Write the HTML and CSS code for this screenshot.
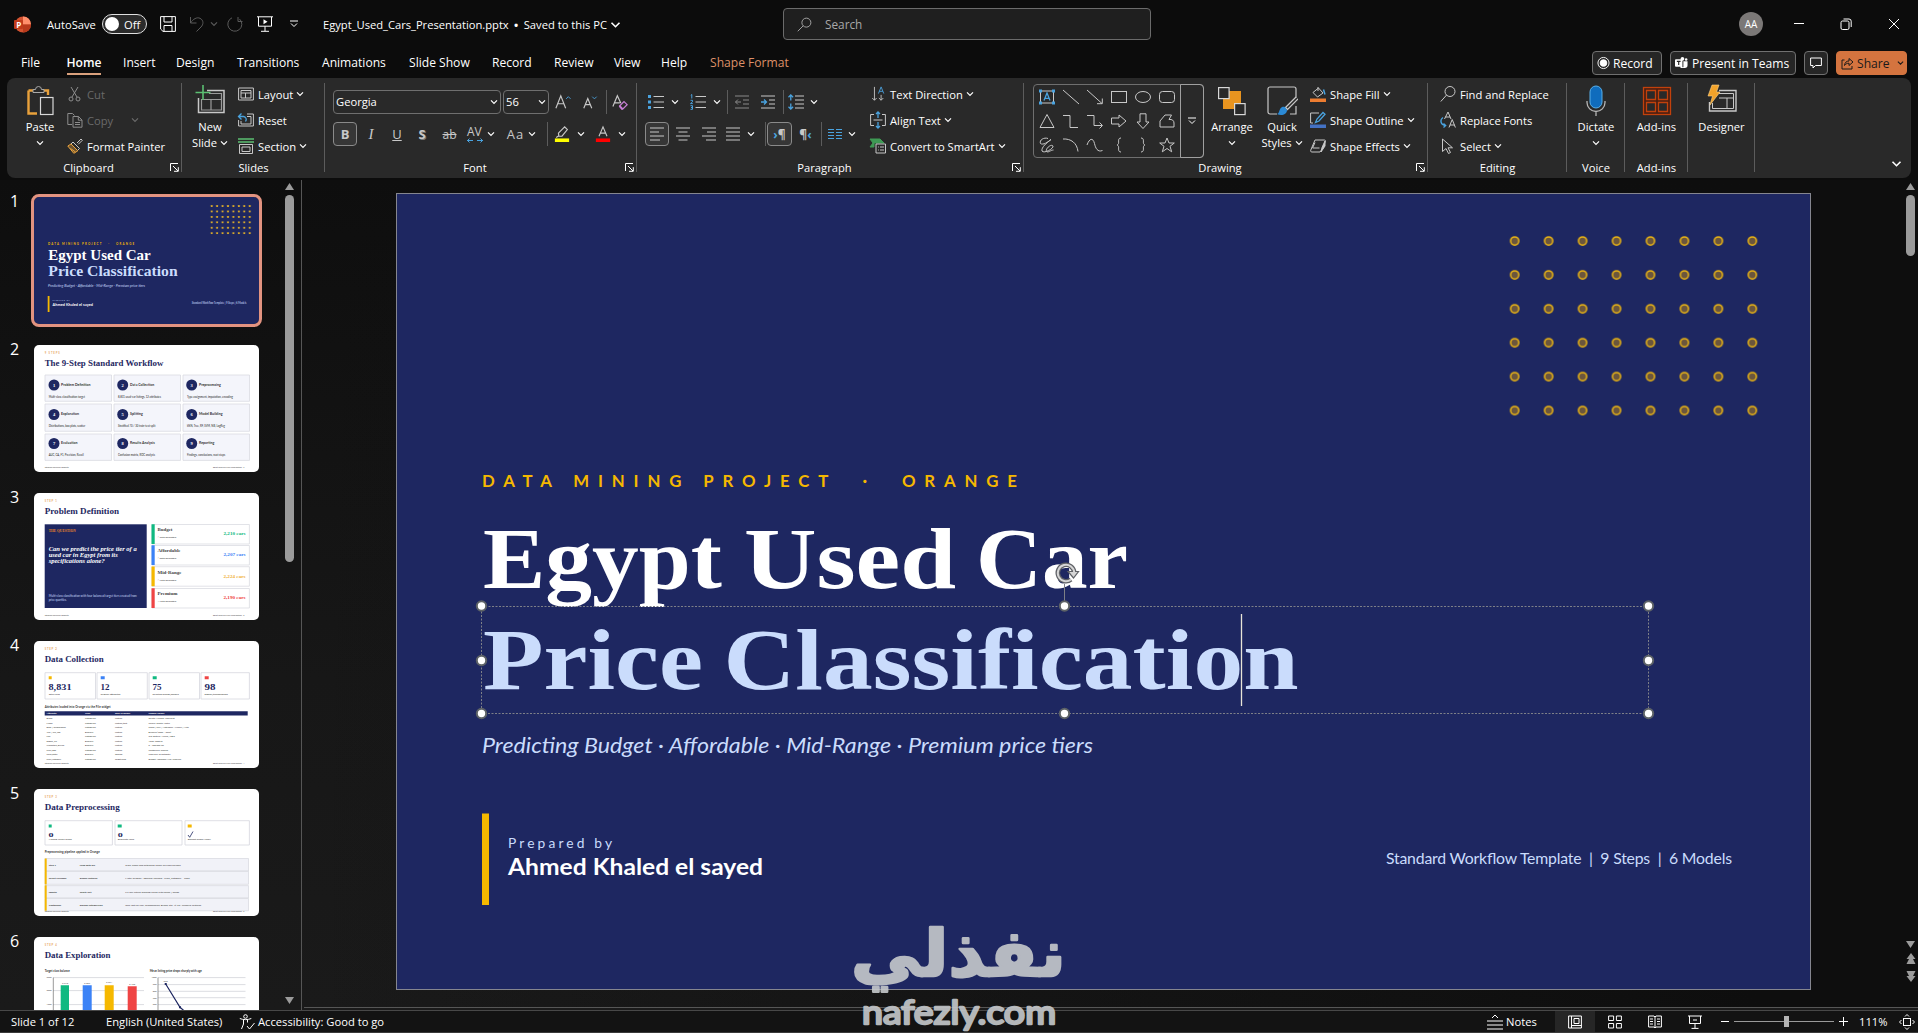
FILE: index.html
```html
<!DOCTYPE html>
<html lang="en">
<head>
  <meta charset="UTF-8">
  <meta name="viewport" content="width=device-width, initial-scale=1.0">
  <title>Egypt_Used_Cars_Presentation.pptx</title>
  <link rel="stylesheet" href="styles.css">
</head>
<body>
  <!-- Shared symbols -->
  <svg class="defs" width="0" height="0">
    <symbol id="chev" viewBox="0 0 8 6"><path d="M1 1.3l3 3 3-3" fill="none" stroke="currentColor" stroke-width="1.2"/></symbol>
    <symbol id="launch" viewBox="0 0 9 9"><path d="M.5 8V.5H8M3 3l5 5M8.3 4.2v4.1H4" fill="none" stroke="currentColor"/></symbol>
  </svg>

  <!-- Title bar -->
  <header class="titlebar">
    <div class="quick">
      <svg class="logo" viewBox="0 0 17 17"><circle cx="9" cy="8.500" r="8" fill="#d35230"/><path d="M9 .5a8 8 0 0 1 8 8H9z" fill="#ff8f6b"/><path d="M9 16.500a8 8 0 0 0 8-8H9z" fill="#b83a1c"/><rect x="0" y="4" width="9" height="9" rx="1" fill="#c13b1b"/><text x="2.200" y="11.500" font-size="8" font-weight="700" fill="#fff">P</text></svg>
      <span>AutoSave</span>
      <div class="toggle"><i></i>Off</div>
      <svg class="ico" viewBox="0 0 16 16"><path d="M.6.6h14.800v14.800H3L.6 13zM4 .6v5.400h8V.6M4 15.400V9.500h8v5.900"/></svg>
      <svg class="ico dim" viewBox="0 0 16 16"><path d="M1.500 1v6h6M1.500 7C4 3 8 .8 11 2.300c4 2 3.500 6.200 1 8.700L7.500 15.500"/></svg>
      <svg class="chev dim"><use href="#chev"/></svg>
      <svg class="ico dim" viewBox="0 0 16 16"><path d="M11 1v4.500h4.500M5 1.800a7 7 0 1 0 7.500 1.200"/></svg>
      <svg class="ico" viewBox="0 0 16 16"><path d="M0 .8h16M1.500 1v9.200h13V1M8 10.200v5M4 15.300h8"/><path d="M6.500 3.200v5l4-2.500z" fill="#fff" stroke="none"/></svg>
      <svg class="ico tiny" viewBox="0 0 8 8"><path d="M0 1h8M1 3.500l3 3 3-3"/></svg>
    </div>
    <div class="docname"><span class="fname">Egypt_Used_Cars_Presentation.pptx</span><b>•</b><span>Saved to this PC</span><svg class="chev big"><use href="#chev"/></svg></div>
    <div class="search"><svg class="ico" viewBox="0 0 16 16"><circle cx="10" cy="6" r="4.800"/><path d="M6.600 9.400L.8 15.200"/></svg>Search</div>
    <div class="winctl">
      <span class="avatar">AA</span>
      <svg class="ico" viewBox="0 0 12 12"><path d="M1 5.500h10"/></svg>
      <svg class="ico" viewBox="0 0 12 12"><rect x="1" y="3" width="8" height="8.500" rx="1.500"/><path d="M3.500 1h5.500a2.200 2.200 0 0 1 2.200 2.200V9"/></svg>
      <svg class="ico" viewBox="0 0 12 12"><path d="M1 1l10 10M11 1L1 11"/></svg>
    </div>
  </header>

  <!-- Tabs -->
  <nav class="tabs">
    <div class="tablist">
      <a>File</a><a class="active">Home</a><a>Insert</a><a>Design</a><a>Transitions</a><a>Animations</a><a>Slide Show</a><a>Record</a><a>Review</a><a>View</a><a>Help</a><a class="context">Shape Format</a>
    </div>
    <div class="actions">
      <button class="abtn rec"><svg class="ico" viewBox="0 0 14 14"><circle cx="7" cy="7" r="6"/><circle cx="7" cy="7" r="3.600" fill="#fff"/></svg>Record</button>
      <button class="abtn teams"><svg viewBox="0 0 14 14"><circle cx="8" cy="2.500" r="2" fill="#fff"/><circle cx="12" cy="3.300" r="1.400" fill="#fff"/><path d="M5 5h8.500v4.500a3 3 0 0 1-3 3H6z" fill="#fff"/><rect x="0" y="3" width="8" height="8" rx="1" fill="#fff"/><path d="M8.500 5v6.500" stroke="#222"/><path d="M2 5.200h4M4 5.200v4" stroke="#222" fill="none" stroke-width="1.200"/></svg>Present in Teams</button>
      <button class="abtn note"><svg class="ico" viewBox="0 0 12 12"><path d="M.6 1h10.800v7.500H5.500L3 11V8.500H.6z"/></svg></button>
      <button class="abtn share"><svg class="ico" viewBox="0 0 13 13"><path d="M3.500 3.500H1v9h10V9.500M3.500 9c.3-3 2-4.500 4.500-4.500V2l4 3.500-4 3.500V6.700C6 6.700 4.500 7.500 3.500 9z"/></svg>Share<svg class="chev"><use href="#chev"/></svg></button>
    </div>
  </nav>

  <!-- Ribbon -->
  <section class="ribbon">
    <div class="group clipboard">
      <div class="body">
        <div class="bigbtn">
          <svg viewBox="0 0 32 32"><path d="M4.500 6.500h5M19 6.500h5V11M13 29.500H4.500V6.500" fill="none" stroke="#e9a13b" stroke-width="2.400"/><path d="M9 8.500V5.500h2.500a3 3 0 0 1 6 0H20v3z" fill="#292929" stroke="#a9a9a9"/><rect x="16.500" y="13.500" width="12.500" height="17" fill="#292929" stroke="#d8d8d8" stroke-width="1.200"/></svg>
          Paste<svg class="chev"><use href="#chev"/></svg>
        </div>
        <div class="stack">
          <div class="sbtn dis"><svg class="ico" viewBox="0 0 16 16"><path d="M4 1l6 10M11 1L5 11"/><circle cx="4" cy="13" r="2"/><circle cx="11" cy="13" r="2"/></svg>Cut</div>
          <div class="sbtn dis"><svg class="ico" viewBox="0 0 16 16"><path d="M5 12.500H.8V1.500h4.700l2 2M6 4.500h5.500l3.500 3.500v7.200H6zM11.300 4.500v3.700H15M8 10.500h5M8 12.500h5"/></svg>Copy<svg class="chev far"><use href="#chev"/></svg></div>
          <div class="sbtn"><svg class="ico" viewBox="0 0 16 16"><path d="M10 5l4-4 1.300 1.300-4 4M6 4l6.500 6.500-2 2L4 6z"/><path d="M4 6L.8 8l6 7.300 4-2.500z" fill="#e9a13b" fill-opacity=".35" stroke="#e9a13b"/><path d="M3.500 10.500l5 3.500" stroke="#e9a13b"/></svg>Format Painter</div>
        </div>
      </div>
      <div class="label"><span>Clipboard</span><svg><use href="#launch"/></svg></div>
    </div>

    <div class="group slides">
      <div class="body">
        <div class="bigbtn">
          <svg viewBox="0 0 32 32"><path d="M13 6.500h17v22H4.500V14" fill="none" stroke="#c8c8c8" stroke-width="1.500"/><path d="M15 9.500h12.500v16.500H7.500V15M7.500 15.500h20M17 15.500V26" fill="none" stroke="#9a9a9a" stroke-width="1.200"/><path d="M9 1v15M1.500 8.500h15" stroke="#5bbf72" stroke-width="1.600"/></svg>
          New<span>Slide <svg class="chev"><use href="#chev"/></svg></span>
        </div>
        <div class="stack">
          <div class="sbtn"><svg class="ico" viewBox="0 0 16 16"><path d="M.6 2h14.800v12H.6zM3 4.500h10M3 7h10M3 4.500V12h10V4.500M7.500 7v5"/></svg>Layout<svg class="chev"><use href="#chev"/></svg></div>
          <div class="sbtn"><svg class="ico" viewBox="0 0 16 16"><path d="M9 2h6.400v12H.6V8M9 4.500h4V12H3V9"/><path d="M1 4.500h4.500a3 3 0 0 1 2 5M3.500 1.500l-3 3 3 3" stroke="#4aa3df" stroke-width="1.300"/></svg>Reset</div>
          <div class="sbtn"><svg class="ico" viewBox="0 0 16 16"><path d="M0 1h16M0 4h16" stroke="#5bbf72" stroke-width="1.400"/><path d="M1.500 6.500h13v9h-13zM4 9h8v4.500H4z"/></svg>Section<svg class="chev"><use href="#chev"/></svg></div>
        </div>
      </div>
      <div class="label"><span>Slides</span></div>
    </div>

    <div class="group font">
      <div class="rows">
        <div class="row fr1">
          <div class="combo face">Georgia<svg class="chev"><use href="#chev"/></svg></div>
          <div class="combo size">56<svg class="chev"><use href="#chev"/></svg></div>
          <div class="cell left0"><svg class="ico" viewBox="0 0 18 18"><path d="M1 16L6.500 2 12 16M3 11h7" stroke-width="1.300"/><path d="M12.500 5.500L15 3l2.500 2.500" stroke="#4aa3df"/></svg></div>
          <div class="cell left0"><svg class="ico" viewBox="0 0 18 18"><path d="M2 16L6.500 5 11 16M3.500 12h6" stroke-width="1.300"/><path d="M11.500 3L14 5.500 16.500 3" stroke="#4aa3df"/></svg></div>
          <i class="sep"></i>
          <div class="cell left0"><svg class="ico" viewBox="0 0 18 18"><path d="M1 14L6 2l4 8.500M2.800 10h6" stroke-width="1.300"/><path d="M8.500 13.500l5-5 3.500 3.500-5 5H11z" stroke="#c77fd6" stroke-width="1.400"/><path d="M8.500 13.500l3.500 3.500" stroke="#c77fd6" stroke-width="2"/></svg></div>
        </div>
        <div class="row fr2">
          <div class="cell on"><b>B</b></div>
          <div class="cell"><em>I</em></div>
          <div class="cell"><u>U</u></div>
          <div class="cell"><b class="shadow">S</b></div>
          <div class="cell"><s>ab</s></div>
          <div class="cell"><span class="av">AV<svg viewBox="0 0 16 5"><path d="M0 2.500h6M10 2.500h6M2.500.5l-2 2 2 2M13.500.5l2 2-2 2" fill="none" stroke="#4aa3df"/></svg></span><svg class="chev"><use href="#chev"/></svg></div>
          <div class="cell"><span class="aa">Aa</span><svg class="chev"><use href="#chev"/></svg></div>
          <i class="sep"></i>
          <div class="cell"><svg class="ico" viewBox="0 0 16 18"><path d="M4 8l7-7 3 3-6 7.500H4.500zM4.500 11l-3 2" stroke-width="1.300"/><rect y="14" width="16" height="4" fill="#ffff00" stroke="none"/></svg><svg class="chev gap"><use href="#chev"/></svg></div>
          <div class="cell"><svg class="ico" viewBox="0 0 16 18"><path d="M3.500 11.500L8 1l4.500 10.500M5 8h6" stroke-width="1.300"/><rect y="14" width="16" height="4" fill="#ff0000" stroke="none"/></svg><svg class="chev gap"><use href="#chev"/></svg></div>
        </div>
      </div>
      <div class="label"><span>Font</span><svg><use href="#launch"/></svg></div>
    </div>

    <div class="group para">
      <div class="body">
        <div class="rows">
          <div class="row pr1">
            <div class="cell left"><svg class="ico" viewBox="0 0 16 16"><path d="M5.500 2.500H16M5.500 8H16M5.500 13.500H16"/><path d="M0 1h3v3H0zM0 6.500h3v3H0zM0 12h3v3H0z" fill="#4aa3df" stroke="none"/></svg><svg class="chev gap"><use href="#chev"/></svg></div>
            <div class="cell left"><svg class="ico" viewBox="0 0 16 16"><path d="M5.500 2.500H16M5.500 8H16M5.500 13.500H16"/><path d="M.8 1.300l1-.8V4.500M.5 6.300h2v1.500l-2 1.800h2.300M.5 11.700h2v3.600h-2M1 13.500h1.500" stroke="#4aa3df"/></svg><svg class="chev gap"><use href="#chev"/></svg></div>
            <i class="sep"></i>
            <div class="cell dis2"><svg class="ico" viewBox="0 0 16 16"><path d="M1 2h14M9 6h6M9 10h6M1 14h14M7 8H1.500M4 5.500L1.500 8 4 10.500"/></svg></div>
            <div class="cell"><svg class="ico" viewBox="0 0 16 16"><path d="M1 2h14M9 6h6M9 10h6M1 14h14"/><path d="M1 8h5.500M4 5.500L6.500 8 4 10.500" stroke="#4aa3df" stroke-width="1.300"/></svg></div>
            <i class="sep"></i>
            <div class="cell left"><svg class="ico ml" viewBox="0 0 16 16"><path d="M7 2h9M7 6h9M7 10h9M7 14h9"/><path d="M2.800 1v5.500M.5 3.200l2.300-2.300 2.300 2.300M2.800 9.500V15M.5 12.800l2.300 2.300 2.300-2.300" stroke="#4aa3df" stroke-width="1.300"/></svg><svg class="chev"><use href="#chev"/></svg></div>
          </div>
          <div class="row pr2">
            <div class="cell on"><svg class="ico" viewBox="0 0 16 16"><path d="M1 2h14M1 6h9M1 10h14M1 14h10"/></svg></div>
            <div class="cell"><svg class="ico" viewBox="0 0 16 16"><path d="M1 2h14M3.500 6h9M1 10h14M3.500 14h9"/></svg></div>
            <div class="cell"><svg class="ico" viewBox="0 0 16 16"><path d="M1 2h14M6 6h9M1 10h14M5 14h10"/></svg></div>
            <div class="cell left"><svg class="ico just" viewBox="0 0 16 16"><path d="M1 2h14M1 6h14M1 10h14M1 14h14"/></svg><svg class="chev"><use href="#chev"/></svg></div>
            <i class="sep"></i>
            <div class="cell on"><span class="pil"><i>›</i>¶</span></div>
            <div class="cell"><span class="pil">¶<i>‹</i></span></div>
            <i class="sep"></i>
            <div class="cell left"><svg class="ico cols" viewBox="0 0 14 12"><path d="M0 1.500h6M0 4.500h6M0 7.500h6M0 10.500h6M8 1.500h6M8 4.500h6M8 7.500h6M8 10.500h6" stroke="#4aa3df"/></svg><svg class="chev"><use href="#chev"/></svg></div>
          </div>
        </div>
        <div class="stack">
          <div class="sbtn"><svg class="ico" viewBox="0 0 16 18"><path d="M4 1v15M1.500 13.500L4 16l2.500-2.500M11.500 10v6M9 13.500l2.500 2.500 2.500-2.500"/><path d="M8.500 8.500l3-7.500 3 7.500M9.500 6h4" stroke="#4aa3df"/></svg>Text Direction<svg class="chev"><use href="#chev"/></svg></div>
          <div class="sbtn"><svg class="ico" viewBox="0 0 16 16"><path d="M4 2.500H.6v11H4M12 2.500h3.400v11H12M3.500 8h9"/><path d="M8 0v6M8 10v6M6 2l2-2 2 2M6 14l2 2 2-2" stroke="#4aa3df" stroke-width="1.300"/></svg>Align Text<svg class="chev"><use href="#chev"/></svg></div>
          <div class="sbtn"><svg class="ico" viewBox="0 0 16 16"><path d="M0 1h10l4 4H4v4H0l3-4z" fill="#3f9a55" stroke="#3f9a55"/><path d="M6 6h9.500v9H6z" fill="#292929"/><path d="M8 9h.8M10 9h4M8 12h.8M10 12h4"/></svg>Convert to SmartArt<svg class="chev"><use href="#chev"/></svg></div>
        </div>
      </div>
      <div class="label"><span>Paragraph</span><svg><use href="#launch"/></svg></div>
    </div>

    <div class="group drawing">
      <div class="body">
        <div class="gallery">
          <div class="shapes">
            <svg class="ico" viewBox="0 0 16 16"><rect x="1.500" y="2" width="13" height="12"/><path d="M5 11.500L8 4l3 7.500M6 9.300h4" stroke="#4aa3df" stroke-width="1.300"/><path d="M0 .5h3v3H0zM13 .5h3v3h-3zM0 12.500h3v3H0zM13 12.500h3v3h-3z" fill="#4aa3df" stroke="none"/></svg>
            <svg class="ico" viewBox="0 0 16 16"><path d="M0 1l16 14"/></svg>
            <svg class="ico" viewBox="0 0 16 16"><path d="M0 1l15 13.500M15.300 9.500v5.200H10"/></svg>
            <svg class="ico" viewBox="0 0 16 16"><rect x=".5" y="2.500" width="15" height="11"/></svg>
            <svg class="ico" viewBox="0 0 16 16"><ellipse cx="8" cy="8" rx="7.500" ry="5.500"/></svg>
            <svg class="ico" viewBox="0 0 16 16"><rect x=".5" y="2.500" width="15" height="11" rx="3"/></svg>
            <svg class="ico" viewBox="0 0 16 16"><path d="M8 1.500l7 13H1z"/></svg>
            <svg class="ico" viewBox="0 0 16 16"><path d="M0 2.500h7v12h8"/></svg>
            <svg class="ico" viewBox="0 0 16 16"><path d="M0 2.500h7v10h8M12.500 9.500l3 3-3 3"/></svg>
            <svg class="ico" viewBox="0 0 16 16"><path d="M.5 5h7.500V2l7 6-7 6v-3H.5z"/></svg>
            <svg class="ico" viewBox="0 0 16 16"><path d="M5 .8h6V9h3l-6 6.500L2 9h3z"/></svg>
            <svg class="ico" viewBox="0 0 16 16"><path d="M1 14V8l5-6h6.500L10 6.500c3-.5 5 1 5 3.500v4z"/></svg>
            <svg class="ico" viewBox="0 0 16 16"><path d="M9 1.500C5 0 0 3 1.500 6.500 4 8.500 9 5 12 2.500c-4 3-10 8-9 11.500 2 3 12-2.500 11-5C12 6.500 6 12 7.500 14.500c2 1.500 4-1.500 7-1.500"/></svg>
            <svg class="ico" viewBox="0 0 16 16"><path d="M0 2c8-.5 14 4 15 12.500"/></svg>
            <svg class="ico" viewBox="0 0 16 16"><path d="M0 8c2.500-7 6-7.500 7.500-1.500 1 4.500 3 9 8 7"/></svg>
            <svg class="ico" viewBox="0 0 16 16"><path d="M10 1C6.500 1 8 5 7.500 6.500 7 8 6 8 6 8s1 0 1.500 1.500C8 11 6.500 15 10 15"/></svg>
            <svg class="ico" viewBox="0 0 16 16"><path d="M6 1c3.500 0 2 4 2.500 5.500C9 8 10 8 10 8s-1 0-1.500 1.500C8 11 9.500 15 6 15"/></svg>
            <svg class="ico" viewBox="0 0 16 16"><path d="M8 1l2 5h5.300l-4.300 3.300 1.700 5.500L8 11.500l-4.700 3.300L5 9.300.7 6H6z"/></svg>
          </div>
          <div class="more"><svg class="ico" viewBox="0 0 8 8"><path d="M0 1h8M1 3.500l3 3 3-3"/></svg></div>
        </div>
        <div class="bigbtn">
          <svg viewBox="0 0 32 32"><rect x="7" y="7" width="18" height="18" fill="#e8941f"/><rect x="2.600" y="3.600" width="10.500" height="11" fill="#292929" stroke="#d8d8d8" stroke-width="1.200"/><rect x="18.600" y="19.600" width="10.500" height="11" fill="#292929" stroke="#d8d8d8" stroke-width="1.200"/></svg>
          Arrange<svg class="chev"><use href="#chev"/></svg>
        </div>
        <div class="bigbtn">
          <svg viewBox="0 0 32 32"><path d="M11 30H4a2 2 0 0 1-2-2V5a2 2 0 0 1 2-2h24a2 2 0 0 1 2 2v10M24 30h6v-8" fill="none" stroke="#c8c8c8" stroke-width="1.200"/><path d="M31 14L20 25" stroke="#c8c8c8" stroke-width="4"/><path d="M31 14L21 24" stroke="#292929" stroke-width="1.600"/><path d="M19 23c-4-1-5 2-6 5-1 2-2 2-2 2 4 2 10 1 10-4z" fill="#2b8ad6"/></svg>
          Quick<span>Styles <svg class="chev"><use href="#chev"/></svg></span>
        </div>
        <div class="stack">
          <div class="sbtn"><svg class="ico" viewBox="0 0 16 16"><path d="M8 1v4M3 6.500L8.500 2 13 7l-5.500 4z"/><path d="M13.500 3.500l1.500 5" stroke="#4aa3df" stroke-width="1.500"/><path d="M0 12.500h16v3.500H0z" fill="#ed7d31" stroke="none"/></svg>Shape Fill<svg class="chev"><use href="#chev"/></svg></div>
          <div class="sbtn"><svg class="ico" viewBox="0 0 16 16"><path d="M9 1H.6v10H3"/><path d="M5.500 10.500L7 7l6-6.500 2 1.800L9 9z" stroke="#4aa3df" stroke-width="1.300"/><path d="M0 12.500h16v3.500H0z" fill="#4472c4" stroke="none"/></svg>Shape Outline<svg class="chev"><use href="#chev"/></svg></div>
          <div class="sbtn"><svg class="ico" viewBox="0 0 16 16"><path d="M5 2h9.500c1 0 1 .5.800 1.500L13 10l-3 4H2c-1.500 0-1.500-1-1.200-2z"/><path d="M12 9.500L15 3v5l-4 6z" fill="#c8c8c8"/><path d="M5 4.500L2.500 10h7"/></svg>Shape Effects<svg class="chev"><use href="#chev"/></svg></div>
        </div>
      </div>
      <div class="label"><span>Drawing</span><svg><use href="#launch"/></svg></div>
    </div>

    <div class="group editing">
      <div class="body">
        <div class="stack">
          <div class="sbtn"><svg class="ico" viewBox="0 0 16 16"><circle cx="10" cy="5.500" r="5"/><path d="M6.600 9L.8 15.500"/></svg>Find and Replace</div>
          <div class="sbtn"><svg class="ico" viewBox="0 0 16 16"><path d="M4.500 7L8 0l3 7M5.500 5h4.500M9 15.500l3.200-8 3.200 8M10 13h4.500"/><path d="M3 5.500C-.5 8 .5 13 5.500 13.500M3.500 11.500l2.200 2-2.200 2" stroke="#4aa3df" stroke-width="1.300"/></svg>Replace Fonts</div>
          <div class="sbtn"><svg class="ico" viewBox="0 0 16 16"><path d="M2.500 1v12.500l3.500-3 2.500 5 2-1-2.500-4.700h4.500z"/></svg>Select<svg class="chev"><use href="#chev"/></svg></div>
        </div>
      </div>
      <div class="label"><span>Editing</span></div>
    </div>

    <div class="group voice">
      <div class="bigbtn">
        <svg viewBox="0 0 32 32"><rect x="10" y="2" width="12" height="22" rx="6" fill="#0f6cbd" stroke="#58aee8"/><path d="M7 17v1.500a9 9 0 0 0 18 0V17M16 27.500V32" fill="none" stroke="#b5b5b5" stroke-width="1.300"/></svg>
        Dictate<svg class="chev"><use href="#chev"/></svg>
      </div>
      <div class="label"><span>Voice</span></div>
    </div>

    <div class="group addins">
      <div class="bigbtn">
        <svg viewBox="0 0 32 32"><rect x="2.500" y="3.500" width="27" height="27" fill="#4a1f12" stroke="#c2410c" stroke-width="1.300"/><path d="M5.500 6.500h9v9h-9zM17.500 6.500h9v9h-9zM5.500 18.500h9v9h-9zM17.500 18.500h9v9h-9z" fill="#292929" stroke="#c2410c" stroke-width="1.300"/></svg>
        Add-ins
      </div>
      <div class="label"><span>Add-ins</span></div>
    </div>

    <div class="group designer">
      <div class="bigbtn">
        <svg viewBox="0 0 32 32"><path d="M13 6.500h17v20.500H3.500V18" fill="none" stroke="#c8c8c8" stroke-width="1.400"/><path d="M13 9.500h14.500v15H6.500V19M13 14h14.500M21 14v10.500" fill="none" stroke="#c8c8c8"/><path d="M6 1h7l-2.500 7H14L4 21l2.500-9H2z" fill="#f3a32a" stroke="#ffd58a" stroke-width=".6"/></svg>
        Designer
      </div>
      <div class="label"></div>
    </div>
    <svg class="chev collapse"><use href="#chev"/></svg>
  </section>

  <!-- Workspace -->
  <main class="work">
    <aside class="pane">
      <div class="list">
        <div class="item sel"><span>1</span>
          <svg class="thumb" viewBox="0 0 225 127">
            <defs><pattern id="d" x="175" y="6.300" width="5.430" height="5.430" patternUnits="userSpaceOnUse"><rect x="1.700" y="1.700" width="2" height="2" rx=".6" fill="#d9a92a"/></pattern></defs>
            <rect width="225" height="127" fill="#1e2761"/>
            <rect x="175" y="6.300" width="43.400" height="32.500" fill="url(#d)"/>
            <text class="la b" x="14" y="48" font-size="2.800" fill="#f5b800" textLength="86" xml:space="preserve">DATA MINING PROJECT   ·   ORANGE</text>
            <g class="se" font-size="14"><text x="14.300" y="63.300" fill="#fff" textLength="102.400" lengthAdjust="spacingAndGlyphs">Egypt Used Car</text>
            <text x="14.300" y="79" fill="#cadcfc" textLength="129.400" lengthAdjust="spacingAndGlyphs">Price Classification</text></g>
            <text class="la it" x="14" y="90" font-size="3.700" fill="#cadcfc" textLength="97">Predicting Budget · Affordable · Mid-Range · Premium price tiers</text>
            <rect x="13.700" y="99" width="1.800" height="16" fill="#f5b800"/>
            <text class="la" x="18.500" y="103.800" font-size="2" fill="#cadcfc" textLength="17">Prepared by</text>
            <text class="la b" x="18.500" y="109.400" font-size="3.800" fill="#fff" textLength="40.500">Ahmed Khaled el sayed</text>
            <text class="la" x="157.700" y="107" font-size="2.700" fill="#cadcfc" textLength="54.700">Standard Workflow Template | 9 Steps | 6 Models</text>
          </svg>
        </div>
        <div class="item"><span>2</span>
          <svg class="thumb" viewBox="0 0 225 127">
            <rect width="225" height="127" fill="#fff"/>
            <text class="la b" x="10.700" y="9.400" font-size="2.700" fill="#e8a96a" textLength="15">9 STEPS</text>
            <text class="se" x="10.700" y="20.700" font-size="7.800" fill="#1e2761" textLength="118.700" lengthAdjust="spacingAndGlyphs">The 9-Step Standard Workflow</text>
            <g fill="#f4f5fb" stroke="#d5d7de" stroke-width=".7"><path d="M11 30h66.500v26.300H11zM80 30h66.500v26.300H80zM149 30h66.500v26.300H149zM11 59h66.500v27.300H11zM80 59h66.500v27.300H80zM149 59h66.500v27.300H149zM11 89h66.500v26.400H11zM80 89h66.500v26.400H80zM149 89h66.500v26.400H149z"/></g>
            <g fill="#1e2761"><circle cx="20" cy="40" r="5.500"/><circle cx="88.700" cy="40" r="5.500"/><circle cx="157.700" cy="40" r="5.500"/><circle cx="20" cy="69.500" r="5.500"/><circle cx="88.700" cy="69.500" r="5.500"/><circle cx="157.700" cy="69.500" r="5.500"/><circle cx="20" cy="98.500" r="5.500"/><circle cx="88.700" cy="98.500" r="5.500"/><circle cx="157.700" cy="98.500" r="5.500"/></g>
            <g class="se mid" font-size="4.500" fill="#fff"><text x="20" y="41.600">1</text><text x="88.700" y="41.600">2</text><text x="157.700" y="41.600">3</text><text x="20" y="71">4</text><text x="88.700" y="71">5</text><text x="157.700" y="71">6</text><text x="20" y="100">7</text><text x="88.700" y="100">8</text><text x="157.700" y="100">9</text></g>
            <g class="la b" font-size="3.500" fill="#333"><text x="27" y="41">Problem Definition</text><text x="96" y="41">Data Collection</text><text x="165" y="41">Preprocessing</text><text x="27" y="70">Exploration</text><text x="96" y="70">Splitting</text><text x="165" y="70">Model Building</text><text x="27" y="99">Evaluation</text><text x="96" y="99">Results Analysis</text><text x="165" y="99">Reporting</text></g>
            <g class="la" font-size="2.700" fill="#222"><text x="14.700" y="52.500">Multi-class classification target</text><text x="84" y="52.500">8,831 used-car listings, 12 attributes</text><text x="153" y="52.500">Type assignment, imputation, encoding</text><text x="14.700" y="81.500">Distributions, box plots, scatter</text><text x="84" y="81.500">Stratified 70 / 30 train-test split</text><text x="153" y="81.500">kNN, Tree, RF, SVM, NB, LogReg</text><text x="14.700" y="110.700">AUC, CA, F1, Precision, Recall</text><text x="84" y="110.700">Confusion matrix, ROC analysis</text><text x="153" y="110.700">Findings, conclusions, next steps</text></g>
            <g class="la" font-size="1.900" fill="#444"><text x="10.700" y="122.500">Standard Workflow Template</text><text x="179" y="122.500">Egypt Used Car Price Classification · 2</text></g>
          </svg>
        </div>
        <div class="item"><span>3</span>
          <svg class="thumb" viewBox="0 0 225 127">
            <rect width="225" height="127" fill="#fff"/>
            <text class="la b" x="10.700" y="9" font-size="2.700" fill="#e8a96a" textLength="12">STEP 1</text>
            <text class="se" x="10.700" y="20.600" font-size="7.800" fill="#1e2761" textLength="74.300" lengthAdjust="spacingAndGlyphs">Problem Definition</text>
            <rect x="10.700" y="31.300" width="102" height="83.700" fill="#1e2761"/>
            <text class="se" x="14.700" y="38.500" font-size="3.400" fill="#f08a24" textLength="27">THE QUESTION</text>
            <g class="se it" font-size="5.600" fill="#fff"><text x="14.700" y="57.600" textLength="88" lengthAdjust="spacingAndGlyphs">Can we predict the price tier of a</text><text x="14.700" y="63.600" textLength="69" lengthAdjust="spacingAndGlyphs">used car in Egypt from its</text><text x="14.700" y="69.700" textLength="56" lengthAdjust="spacingAndGlyphs">specifications alone?</text></g>
            <g class="la" font-size="2.900" fill="#cadcfc"><text x="14.700" y="103.500" textLength="88">Multi-class classification with four balanced target tiers created from</text><text x="14.700" y="107.500" textLength="18">price quartiles.</text></g>
            <g fill="#fff" stroke="#d5d7de" stroke-width=".7"><path d="M118 31.500h97.400v19.500H118zM118 52.500h97.400V72H118zM118 73.700h97.400v19.500H118zM118 95.500h97.400V115H118z"/></g>
            <path fill="#10b981" d="M117.500 31.300h3.200v19.700h-3.200z"/><path fill="#3b82f6" d="M117.500 52.300h3.200V72h-3.200z"/><path fill="#f5b800" d="M117.500 73.500h3.200v19.700h-3.200z"/><path fill="#ef4444" d="M117.500 95.300h3.200V115h-3.200z"/>
            <g class="se" font-size="4.200" fill="#444"><text x="123.500" y="38.300" textLength="15" lengthAdjust="spacingAndGlyphs">Budget</text><text x="123.500" y="59.400" textLength="23" lengthAdjust="spacingAndGlyphs">Affordable</text><text x="123.500" y="80.500" textLength="24" lengthAdjust="spacingAndGlyphs">Mid-Range</text><text x="123.500" y="101.500" textLength="20" lengthAdjust="spacingAndGlyphs">Premium</text></g>
            <g class="la" font-size="2.500" fill="#333"><text x="123.500" y="45.200">≤ 25th percentile</text><text x="123.500" y="66.200">≤ 50th percentile</text><text x="123.500" y="87.600">≤ 75th percentile</text><text x="123.500" y="109">&gt; 75th percentile</text></g>
            <g class="se" font-size="3.800"><text x="189.500" y="42" fill="#10b981" textLength="22" lengthAdjust="spacingAndGlyphs">2,210 cars</text><text x="189.500" y="63.200" fill="#3b82f6" textLength="22" lengthAdjust="spacingAndGlyphs">2,207 cars</text><text x="189.500" y="84.500" fill="#f0b040" textLength="22" lengthAdjust="spacingAndGlyphs">2,224 cars</text><text x="189.500" y="106" fill="#ef4444" textLength="22" lengthAdjust="spacingAndGlyphs">2,190 cars</text></g>
            <g class="la" font-size="1.900" fill="#444"><text x="10.700" y="122.500">Standard Workflow Template</text><text x="179" y="122.500">Egypt Used Car Price Classification · 3</text></g>
          </svg>
        </div>
        <div class="item"><span>4</span>
          <svg class="thumb" viewBox="0 0 225 127">
            <rect width="225" height="127" fill="#fff"/>
            <text class="la b" x="10.700" y="9" font-size="2.700" fill="#e8a96a" textLength="12">STEP 2</text>
            <text class="se" x="10.700" y="20.600" font-size="7.800" fill="#1e2761" textLength="59" lengthAdjust="spacingAndGlyphs">Data Collection</text>
            <g fill="#fff" stroke="#d5d7de" stroke-width=".8"><path d="M11 31.700h50.500V58H11zM63 31.700h50.300V58H63zM115 31.700h50.500V58H115zM167 31.700h48.400V58H167z"/></g>
            <path fill="#f5b800" d="M14.700 35.300h3v3h-3z"/><path fill="#3b82f6" d="M66.700 35.300h4v3h-4z"/><path fill="#10b981" d="M118.700 35.300h4v3h-4z"/><path fill="#ef4444" d="M170.700 35.300h4v3h-4z"/>
            <g class="se" font-size="9" fill="#1e2761"><text x="14.500" y="48.500" textLength="23" lengthAdjust="spacingAndGlyphs">8,831</text><text x="66.500" y="48.500">12</text><text x="118.500" y="48.500">75</text><text x="170.500" y="48.500" textLength="11" lengthAdjust="spacingAndGlyphs">98</text></g>
            <g class="la" font-size="2.500" fill="#333"><text x="14.700" y="53.500">Total rows</text><text x="66.500" y="53.500">Original attributes</text><text x="118.500" y="53.500">Selected brands/models</text><text x="170.500" y="53.500">Engine/transmissions</text></g>
            <text class="la b" x="10.700" y="66.800" font-size="2.900" fill="#333" textLength="66">Attributes loaded into Orange via the File widget</text>
            <path fill="#1e2761" d="M10.700 70.300h203v4.200h-203z"/>
            <g class="la b" font-size="2.500" fill="#fff"><text x="12.500" y="73.300">Attribute</text><text x="51" y="73.300">Type</text><text x="81" y="73.300">Role in model</text><text x="114.600" y="73.300">Sample values</text></g>
            <g class="la" font-size="2.200" fill="#333">
              <text x="12.500" y="78">Brand</text><text x="51" y="78">Categorical</text><text x="81" y="78">Feature</text><text x="114.600" y="78">Toyota, Hyundai, Chevrolet</text>
              <text x="12.500" y="82.500">Model</text><text x="51" y="82.500">Categorical</text><text x="81" y="82.500">Feature/text</text><text x="114.600" y="82.500">Corolla, Elantra, Optra</text>
              <text x="12.500" y="87">Body / Transmission</text><text x="51" y="87">Categorical</text><text x="81" y="87">Feature</text><text x="114.600" y="87">Sedan / SUV / Hatchback · Manual / Auto</text>
              <text x="12.500" y="91.500">Year / Car_age</text><text x="51" y="91.500">Numeric</text><text x="81" y="91.500">Feature</text><text x="114.600" y="91.500">Numeric (2000 – 2023)</text>
              <text x="12.500" y="96">Fuel</text><text x="51" y="96">Categorical</text><text x="81" y="96">Feature</text><text x="114.600" y="96">Gas, Natural, Hybrid / CNG</text>
              <text x="12.500" y="100.500">Engine_CC</text><text x="51" y="100.500">Numeric</text><text x="81" y="100.500">Feature</text><text x="114.600" y="100.500">1000–2000 cc</text>
              <text x="12.500" y="105">Kilometers_Driven</text><text x="51" y="105">Numeric</text><text x="81" y="105">Feature</text><text x="114.600" y="105">0 – 300,000 km</text>
              <text x="12.500" y="109.500">Price_Egp</text><text x="51" y="109.500">Categorical</text><text x="81" y="109.500">Feature</text><text x="114.600" y="109.500">Continuous, skewed</text>
              <text x="12.500" y="114">Color/state</text><text x="51" y="114">Numeric</text><text x="81" y="114">Ignored</text><text x="114.600" y="114">Used only as metadata</text>
              <text x="12.500" y="118.500">Price_Category</text><text x="51" y="118.500">Categorical</text><text x="81" y="118.500">Target class</text><text x="114.600" y="118.500">Budget, Affordable, Mid, Premium</text>
            </g>
            <g class="la" font-size="1.900" fill="#444"><text x="10.700" y="122.500">Standard Workflow Template</text><text x="179" y="122.500">Egypt Used Car Price Classification · 4</text></g>
          </svg>
        </div>
        <div class="item"><span>5</span>
          <svg class="thumb" viewBox="0 0 225 127">
            <rect width="225" height="127" fill="#fff"/>
            <text class="la b" x="10.700" y="9" font-size="2.700" fill="#e8a96a" textLength="12">STEP 3</text>
            <text class="se" x="10.700" y="20.600" font-size="7.800" fill="#1e2761" textLength="75" lengthAdjust="spacingAndGlyphs">Data Preprocessing</text>
            <g fill="#fff" stroke="#d5d7de" stroke-width=".8"><path d="M11 31.700h67.400V56H11zM81 31.700h67V56H81zM151 31.700h64.400V56H151z"/></g>
            <path fill="#10b981" d="M14.700 35.400h3v3h-3zM83.700 35.400h4v3h-4z"/><path fill="#f5b800" d="M153.700 35.400h4v3h-4z"/>
            <g class="se" font-size="7" fill="#1e2761"><text x="14.500" y="48.400" textLength="5" lengthAdjust="spacingAndGlyphs">0</text><text x="83.700" y="48.400" textLength="5" lengthAdjust="spacingAndGlyphs">0</text></g>
            <path d="M154 46l1.700 2.300L159 42.500" fill="none" stroke="#1e2761" stroke-width=".8"/>
            <g class="la" font-size="2.500" fill="#333"><text x="14.700" y="50.800">Missing values found</text><text x="83.700" y="50.800">Duplicate rows</text><text x="153.700" y="50.800">Dataset model-ready</text></g>
            <text class="la b" x="10.700" y="63.500" font-size="2.900" fill="#333" textLength="55">Preprocessing pipeline applied in Orange</text>
            <g fill="#f1f2f8" stroke="#d5d7de" stroke-width=".7"><path d="M11 69.500h203.500V82H11zM11 82.300h203.500v13H11zM11 96.600h203.500V109H11zM11 109.400h203.500v12.400H11z"/></g>
            <path fill="#f5b800" d="M10.700 69.500h2v26h-2zM10.700 96.300h2v25.500h-2z"/>
            <g class="la b" font-size="2.600" fill="#333"><text x="14.700" y="76.700">Step 1</text><text x="34.700" y="76.700" visibility="hidden"></text><text x="45.700" y="76.700">Load data file</text><text x="14.700" y="89.600">Select Columns</text><text x="45.700" y="89.600">Define features</text><text x="14.700" y="103.700">Impute</text><text x="45.700" y="103.700">Safety net</text><text x="14.700" y="116.600">Continuize</text><text x="45.700" y="116.600">Encode categoricals</text></g>
            <g class="la" font-size="2.600" fill="#333"><text x="91.300" y="76.700">Type, name and extension check on each column</text><text x="91.300" y="89.600">Meta: Original · Ignored: Unused · Price_Category = class</text><text x="91.300" y="103.700">Fill any future missing values with mean / mode</text><text x="91.300" y="116.600">One-hot for fuel, Transmission, Brand, etc. → 75+ numeric features</text></g>
            <g class="la" font-size="1.900" fill="#444"><text x="10.700" y="122.500">Standard Workflow Template</text><text x="179" y="122.500">Egypt Used Car Price Classification · 5</text></g>
          </svg>
        </div>
        <div class="item"><span>6</span>
          <svg class="thumb" viewBox="0 0 225 127">
            <rect width="225" height="127" fill="#fff"/>
            <text class="la b" x="10.700" y="9" font-size="2.700" fill="#e8a96a" textLength="12">STEP 4</text>
            <text class="se" x="10.700" y="20.600" font-size="7.800" fill="#1e2761" textLength="65.800" lengthAdjust="spacingAndGlyphs">Data Exploration</text>
            <g class="la b" font-size="2.900" fill="#333"><text x="10.700" y="35.300" textLength="25">Target class balance</text><text x="115.700" y="35.300" textLength="52">Mean listing price drops sharply with age</text></g>
            <path d="M19 40.600h91M19 53.600h91M19 67.600h91M124 40.600h87.500M124 47.600h87.500M124 54.300h87.500M124 60.700h87.500M124 67.600h87.500" stroke="#c3c5cc" stroke-width=".6"/>
            <path d="M19.300 40.600V80M124 40.600V80" stroke="#555" stroke-width=".6"/>
            <g class="la end" font-size="2.200" fill="#444"><text x="17.500" y="41.400">2500</text><text x="17.500" y="54.400">2000</text><text x="17.500" y="68.400">1500</text><text x="122.500" y="41.400">1000</text><text x="122.500" y="48.400">900</text><text x="122.500" y="55.100">800</text><text x="122.500" y="61.500">700</text><text x="122.500" y="68.400">600</text></g>
            <g class="la mid" font-size="2.400" fill="#444"><text x="31" y="47">2,210</text><text x="53" y="47">2,207</text><text x="75" y="46">2,224</text><text x="98" y="47.500">2,190</text><text x="131.500" y="45">920</text></g>
            <path fill="#10b981" d="M26.700 48.300h8.300V90h-8.300z"/><path fill="#3b82f6" d="M48.700 48.300h9V90h-9z"/><path fill="#f5b800" d="M70.700 48.300h9V90h-9z"/><path fill="#ef4444" d="M93.700 49.300h9V90h-9z"/>
            <path d="M131.700 47L146 70.300 155 78" fill="none" stroke="#1e2761" stroke-width="1.200"/><path d="M130.700 46h2v2h-2zM145 69.300h2v2h-2z" fill="#1e2761"/>
          </svg>
        </div>
      </div>
      <div class="vbar"><i class="up"></i><i class="knob"></i><i class="down"></i></div>
    </aside>

    <section class="canvas">
      <!-- Slide 1: user units are window pixels -->
      <svg class="slide" viewBox="396 193 1415 797">
        <defs><pattern id="dots" x="1497.700" y="224" width="33.950" height="33.900" patternUnits="userSpaceOnUse"><circle cx="17" cy="17" r="4.100" fill="#6b563c" stroke="#ecb512" stroke-width="1.500"/></pattern></defs>
        <rect x="396.500" y="193.500" width="1414" height="796" fill="#1e2761" stroke="#85868f"/>
        <rect x="1497.700" y="224" width="271.600" height="203.400" fill="url(#dots)"/>
        <text class="la b" x="482" y="486.500" font-size="16.800" fill="#f5b800" textLength="535" xml:space="preserve">DATA MINING PROJECT  ·  ORANGE</text>
        <g class="se" font-size="87" fill="#fff">
          <text x="483" y="588" textLength="239" lengthAdjust="spacingAndGlyphs">Egypt</text>
          <text x="744" y="588" textLength="212" lengthAdjust="spacingAndGlyphs">Used</text>
          <text x="976" y="588" textLength="152" lengthAdjust="spacingAndGlyphs">Car</text>
        </g>
        <path class="frame" d="M481.500 606.500h1167v107h-1167z"/>
        <g class="se" font-size="87" fill="#cadcfc">
          <text x="483" y="689" textLength="220" lengthAdjust="spacingAndGlyphs">Price</text>
          <text x="723.500" y="689" textLength="575" lengthAdjust="spacingAndGlyphs">Classification</text>
        </g>
        <path d="M1241.500 614v92" stroke="#e8e4d8" stroke-width="1.300"/>
        <path d="M1064.500 584v17" stroke="#7d7f86"/>
        <g class="handles"><circle cx="481.500" cy="606" r="4.700"/><circle cx="1064.500" cy="606" r="4.700"/><circle cx="1648.500" cy="606" r="4.700"/><circle cx="481.500" cy="660.500" r="4.700"/><circle cx="1648.500" cy="660.500" r="4.700"/><circle cx="481.500" cy="713.500" r="4.700"/><circle cx="1064.500" cy="713.500" r="4.700"/><circle cx="1648.500" cy="713.500" r="4.700"/></g>
        <g fill="none">
          <path d="M1071 579.500a8.200 8.200 0 1 1 3.200-7" stroke="#5f6166" stroke-width="4.600"/>
          <path d="M1068 571.500h10.500l-5 6.500z" fill="#d6d6d6" stroke="#5f6166" stroke-width="1.200"/>
          <path d="M1071 579.500a8.200 8.200 0 1 1 3.200-7" stroke="#d6d6d6" stroke-width="2"/>
        </g>
        <text class="la it" x="482" y="752.500" font-size="21" fill="#cadcfc" textLength="611" lengthAdjust="spacingAndGlyphs">Predicting Budget · Affordable · Mid-Range · Premium price tiers</text>
        <path fill="#f5b800" d="M482 813.500h7v91.500h-7z"/>
        <text class="la" x="508" y="847.500" font-size="13.800" fill="#cadcfc" textLength="104">Prepared by</text>
        <text class="la b" x="508" y="875" font-size="23" fill="#fff" textLength="255" lengthAdjust="spacingAndGlyphs">Ahmed Khaled el sayed</text>
        <text class="la" x="1386" y="864" font-size="15.800" fill="#cadcfc" textLength="346" xml:space="preserve">Standard Workflow Template  |  9 Steps  |  6 Models</text>
      </svg>
      <div class="vbar right"><i class="up"></i><i class="knob"></i><i class="down"></i>
        <svg viewBox="0 0 10 12"><path d="M5 0l4.500 6H7l2.500 5H.5L3 6H.5z"/></svg>
        <svg viewBox="0 0 10 12"><path d="M5 12l4.500-6H7l2.500-5H.5L3 6H.5z"/></svg>
      </div>
    </section>
  </main>

  <!-- Status bar -->
  <footer class="status">
    <span class="s1">Slide 1 of 12</span>
    <span class="s2">English (United States)</span>
    <span class="s3"><svg class="ico" viewBox="0 0 16 16"><circle cx="6.500" cy="2.500" r="1.800"/><path d="M.8 4.500c3.500 1.500 8 1.500 11.500 0M4.500 6v4l-2 5M8.500 6v2.500M8 12l2.500 3L15.500 9"/></svg>Accessibility: Good to go</span>
    <span class="notes"><svg class="ico" viewBox="0 0 16 16"><path d="M5 4l3-3 3 3M0 7h16M0 11h16M0 15h16"/></svg>Notes</span>
    <div class="views">
      <span class="vbtn on"><svg class="ico" viewBox="0 0 14 14"><path d="M.6 1h12.800v12H.6zM3.500 1v12M6 3.500h5v5H6zM3.500 10.500h10"/></svg></span>
      <span class="vbtn"><svg class="ico" viewBox="0 0 14 14"><path d="M.6 1h5v4.500h-5zM8.400 1h5v4.500h-5zM.6 8.500h5V13h-5zM8.400 8.500h5V13h-5z"/></svg></span>
      <span class="vbtn"><svg class="ico" viewBox="0 0 14 14"><path d="M.6 1H6l1 1 1-1h5.400v11H8l-1 1-1-1H.6zM7 2v11M2 4h3M2 6.500h3M2 9h3M9 4h3M9 6.500h3M9 9h3"/></svg></span>
      <span class="vbtn"><svg class="ico" viewBox="0 0 14 14"><path d="M0 1h14M1.500 1v7.500h11V1M7 8.500V13M3.500 13.400h7M5 5h4"/></svg></span>
    </div>
    <div class="zoom"><i class="minus"></i><div class="track"><i></i></div><i class="plus"></i></div>
    <span class="pct">111%</span>
    <svg class="ico fit" viewBox="0 0 16 16"><rect x="4.500" y="4.500" width="7" height="7"/><path d="M6 2.500l2-2 2 2M6 13.500l2 2 2-2M2.500 6l-2 2 2 2M13.500 6l2 2-2 2"/></svg>
  </footer>

  <svg class="mark" viewBox="850 915 220 118">
    <text class="ar" x="1066" y="976" textLength="215" lengthAdjust="spacingAndGlyphs">نفذلي</text>
    <text class="en" x="862" y="1024" textLength="194" lengthAdjust="spacingAndGlyphs">nafezly.com</text>
  </svg>
</body>
</html>
```
FILE: styles.css
```css
* {
  box-sizing: border-box;
}
body {
  margin: 0;
  width: 1918px;
  height: 1033px;
  overflow: hidden;
  display: flex;
  flex-direction: column;
  background: #0c0c0c;
  color: #fff;
  font-family: "Open Sans", "Noto Sans", sans-serif;
  font-size: 11.2px;
  position: relative;
}
.defs {
  position: absolute;
}
svg {
  display: block;
  flex: none;
}
.ico {
  width: 16px;
  height: 16px;
  fill: none;
  stroke: currentColor;
  overflow: visible;
}
.chev {
  width: 8px;
  height: 6px;
}
.dim {
  color: #5a5a5a;
}

/* Title bar */
.titlebar {
  height: 46px;
  flex: none;
  display: grid;
  grid-template-columns: 323px 460px 368px 1fr;
  align-items: start;
}
.quick {
  height: 48px;
  padding-left: 14px;
  display: grid;
  grid-template-columns: 33px 55px 58px 29px 21px 17px 30px 33px 20px;
  align-items: center;
}
.logo {
  width: 17px;
  height: 17px;
}
.toggle {
  width: 45px;
  height: 20px;
  border: 1px solid #e0e0e0;
  border-radius: 10px;
  background: #2b2b2b;
  display: flex;
  align-items: center;
  gap: 5px;
  padding-left: 2px;
}
.toggle i {
  width: 14px;
  height: 14px;
  border-radius: 50%;
  background: #fff;
}
.tiny {
  width: 8px;
  height: 8px;
}
.docname {
  height: 49px;
  display: flex;
  align-items: center;
}
.fname {
  letter-spacing: -0.02px;
}
.docname b {
  width: 15px;
  text-align: center;
}
.docname .big {
  width: 11px;
  height: 8px;
  margin-left: 3px;
}
.search {
  margin-top: 8px;
  height: 32px;
  border: 1px solid #6b6b6b;
  border-radius: 4px;
  background: #1f1f1f;
  color: #a8a8a8;
  display: flex;
  align-items: center;
  gap: 13px;
  padding-left: 13px;
  font-size: 11.8px;
}
.search .ico {
  width: 15px;
  height: 15px;
}
.winctl {
  height: 48px;
  padding-left: 588px;
  display: grid;
  grid-template-columns: 54px 47px 48px 12px;
  align-items: center;
  justify-content: start;
}
.winctl .ico {
  width: 12px;
  height: 12px;
}
.avatar {
  width: 24px;
  height: 24px;
  border-radius: 50%;
  background: #7b7877;
  text-align: center;
  line-height: 24px;
  font-size: 10px;
}

/* Tabs */
.tabs {
  height: 32px;
  flex: none;
  display: flex;
  font-size: 12.1px;
}
.tablist {
  width: 1592px;
  padding-left: 21px;
  display: grid;
  grid-template-columns: 45.500px 56.500px 53px 61px 85px 87px 83px 62px 60px 47px 49px auto;
  line-height: 34px;
}
.tablist a {
  justify-self: start;
  height: 29px;
}
.tablist .active {
  font-weight: 600;
  border-bottom: 2px solid #d9a07c;
}
.tablist .context {
  color: #dd9068;
}
.actions {
  display: flex;
  padding-top: 5px;
}
.abtn {
  height: 24px;
  border: 1px solid #707070;
  border-radius: 4px;
  background: #262626;
  color: #fff;
  font: inherit;
  padding: 0 0 0 4px;
  display: flex;
  align-items: center;
  gap: 3px;
  white-space: nowrap;
}
.abtn svg {
  width: 13px;
  height: 14px;
}
.abtn .chev {
  width: 7px;
  height: 6px;
  margin-left: 4px;
}
.rec {
  width: 70px;
  margin-right: 8px;
}
.teams {
  width: 126px;
  margin-right: 8px;
  gap: 4px;
}
.note {
  width: 24px;
  margin-right: 8px;
  padding-left: 5px;
}
.note .ico {
  width: 12px;
  height: 12px;
}
.share {
  width: 71px;
  background: #d4743f;
  border-color: #d4743f;
  color: #1a1a1a;
}

/* Ribbon */
.ribbon {
  height: 100px;
  flex: none;
  margin: 0 7px;
  background: #292929;
  border-radius: 8px;
  display: flex;
  position: relative;
}
.group {
  display: grid;
  grid-template-rows: 82px 16px;
  grid-template-columns: 100%;
  position: relative;
}
.group::after {
  content: "";
  position: absolute;
  right: 0;
  top: 5px;
  width: 1px;
  height: 89px;
  background: #5c5c5c;
}
.clipboard { width: 175px; }
.slides { width: 143px; }
.font { width: 312px; }
.para { width: 387px; }
.drawing { width: 404px; }
.editing { width: 139px; }
.voice { width: 58px; }
.addins { width: 63px; }
.designer { width: 67px; }
.body {
  display: flex;
}
.label {
  display: flex;
  line-height: 15px;
}
.label span {
  flex: 1;
  text-align: center;
}
.label svg {
  width: 9px;
  height: 9px;
  margin: 3px 3px 0 0;
}
.stack {
  padding-top: 3px;
}
.sbtn {
  height: 26px;
  display: flex;
  align-items: center;
  gap: 4px;
  white-space: nowrap;
}
.sbtn .ico {
  color: #c8c8c8;
}
.sbtn .chev {
  margin-left: -1px;
}
.sbtn .far {
  margin-left: 14px;
}
.dis {
  color: #6a6a6a;
}
.dis .ico {
  color: #8c8c8c;
}
.bigbtn {
  display: flex;
  flex-direction: column;
  align-items: center;
  padding-top: 6px;
  line-height: 16px;
  width: 44px;
  white-space: nowrap;
}
.bigbtn > svg:first-child {
  width: 32px;
  height: 32px;
  margin-bottom: 3px;
}
.bigbtn > .chev {
  margin-top: 5px;
}
.bigbtn span {
  display: flex;
  align-items: center;
  gap: 3px;
}
.clipboard .body { padding-left: 11px; }
.clipboard .stack { margin-left: 5px; }
.slides .body { padding-left: 6px; }
.slides .stack { margin-left: 6px; }
.voice .bigbtn,
.addins .bigbtn,
.designer .bigbtn {
  width: 100%;
}

/* Font and paragraph rows */
.rows {
  padding: 8px 0 0 8px;
}
.row {
  height: 32px;
  display: grid;
  align-items: center;
}
.fr1 { grid-template-columns: 170px 49px 27px 25px 5px 26px; }
.fr2 { grid-template-columns: 24px 28px 24px 26px 29px 34px 47px 4px 41px 40px; }
.pr1 { grid-template-columns: 42px 38px 4px 25px 27px 4px 38px; }
.pr2 { grid-template-columns: 24px 27px 26px 41px 4px 25px 27px 4px 38px; }
.cell {
  height: 24px;
  display: flex;
  align-items: center;
  justify-content: center;
  gap: 4px;
  color: #c8c8c8;
  font-size: 13px;
}
.cell .ico {
  width: 16px;
  height: 16px;
}
.cell .chev {
  color: #fff;
}
.cell.left {
  justify-content: flex-start;
  padding-left: 3px;
  gap: 6px;
}
.cell.left0 {
  justify-content: flex-start;
  padding-left: 3px;
}
.gap {
  margin-left: 3px;
}
.left .gap {
  margin-left: 1px;
}
.on {
  border: 1px solid #8a8a8a;
  border-radius: 4px;
  background: #363636;
}
.dis2 {
  color: #8a8a8a;
}
.sep {
  width: 1px;
  height: 24px;
  background: #5c5c5c;
  justify-self: center;
}
.combo {
  height: 24px;
  border: 1px solid #6f6f6f;
  border-radius: 4px;
  display: flex;
  align-items: center;
  justify-content: space-between;
  padding: 0 2px;
  line-height: 20px;
}
.face { width: 168px; }
.size { width: 46px; }
.cell em {
  font-family: "Liberation Serif", serif;
  font-size: 15px;
}
.shadow {
  text-shadow: 1px 1px 0 #777;
}
.cell s {
  font-size: 12px;
}
.av {
  font-size: 12px;
  line-height: 13px;
}
.av svg {
  width: 16px;
  height: 5px;
}
.aa {
  letter-spacing: 1px;
}
.pil {
  font-size: 12px;
  font-weight: 700;
  display: flex;
}
.pil i {
  color: #4aa3df;
  font-style: normal;
}
.cell .cols {
  width: 14px;
  height: 12px;
  margin-left: 2px;
}
.para .body {
  display: grid;
  grid-template-columns: 233px 1fr;
}

/* Shapes gallery */
.drawing .body {
  gap: 6px;
  padding-left: 9px;
}
.gallery {
  margin-top: 6px;
  width: 171px;
  height: 74px;
  border: 1px solid #6f6f6f;
  border-radius: 4px;
  display: flex;
  color: #c8c8c8;
}
.shapes {
  display: grid;
  grid-template-columns: repeat(6, 24px);
  grid-template-rows: repeat(3, 24px);
  place-items: center;
  padding-left: 1px;
}
.more {
  flex: 1;
  margin: -1px;
  margin-left: 1px;
  border: 1px solid #a0a0a0;
  border-radius: 0 4px 4px 0;
  display: grid;
  place-items: center;
}
.more .ico {
  width: 8px;
  height: 8px;
  color: #fff;
}
.editing .body {
  padding-left: 12px;
}
.collapse {
  width: 11px;
  height: 8px;
  margin: 82px 9px 0 auto;
}

/* Workspace */
.work {
  flex: 1;
  display: flex;
  margin-top: 2px;
  min-height: 0;
  background: linear-gradient(to bottom, #0e0e0e, #171717 60%, #1a1a1a);
}
.pane {
  width: 302px;
  border-right: 1px solid #565656;
  display: flex;
}
.list {
  width: 285px;
  padding-top: 17px;
  overflow: hidden;
}
.item {
  height: 148px;
  display: grid;
  grid-template-columns: 34px 225px;
  align-items: start;
}
.item span {
  margin-top: -8px;
  padding-left: 10px;
  font-size: 16px;
  line-height: 24px;
}
.thumb {
  width: 225px;
  height: 127px;
  border-radius: 5px;
}
.sel .thumb {
  outline: 3px solid #e29380;
}
.la { font-family: Lato, sans-serif; }
.se { font-family: "Liberation Serif", serif; font-weight: 700; font-variant-ligatures: none; }
.b { font-weight: 700; }
.it { font-style: italic; }
.mid { text-anchor: middle; }
.end { text-anchor: end; }

.vbar {
  width: 9px;
  display: flex;
  flex-direction: column;
  padding-top: 3px;
}
.vbar i {
  flex: none;
}
.up,
.down {
  width: 9px;
  height: 7px;
  background: #9b9b9b;
  clip-path: polygon(50% 0, 100% 100%, 0 100%);
}
.down {
  clip-path: polygon(0 0, 100% 0, 50% 100%);
}
.knob {
  height: 367px;
  margin: 5px 0 435px;
  border-radius: 5px;
  background: #9b9b9b;
}
.canvas {
  flex: 1;
  margin-left: 2px;
  height: 828px;
  display: flex;
  border-bottom: 1px solid #565656;
  background: linear-gradient(to right, rgba(14, 14, 14, 0), #0e0e0e 90%);
}
.slide {
  width: 1415px;
  height: 797px;
  margin: 13px 95px 0 92px;
}
.frame {
  fill: none;
  stroke: #7e8088;
  stroke-dasharray: 2 1.500;
}
.handles circle {
  fill: #fff;
  stroke: #5d6266;
  stroke-width: 2;
}
.right .knob {
  height: 61px;
  margin-bottom: 685px;
}
.right svg {
  width: 10px;
  height: 12px;
  margin-top: 5px;
  fill: #9b9b9b;
}

/* Status bar */
.status {
  height: 23px;
  flex: none;
  border-top: 1px solid #484848;
  border-bottom: 1px solid #3a3a3a;
  background: #131313;
  display: grid;
  grid-template-columns: 95px 133px 1248px 68px 156px 148px 40px 16px;
  padding-left: 11px;
  align-items: center;
  line-height: 19px;
}
.status > * {
  white-space: nowrap;
}
.s3,
.notes {
  display: flex;
  align-items: center;
  gap: 3px;
}
.views {
  display: grid;
  grid-template-columns: repeat(4, 40px);
  height: 21px;
}
.vbtn {
  display: grid;
  place-items: center;
}
.vbtn.on {
  border: 0;
  border-radius: 0;
  background: #262626;
}
.vbtn .ico {
  width: 14px;
  height: 14px;
}
.zoom {
  display: grid;
  grid-template-columns: 8px 100px 9px;
  gap: 5px;
  align-items: center;
  padding-left: 10px;
}
.minus,
.plus {
  height: 1px;
  background: #fff;
}
.plus {
  position: relative;
}
.plus::after {
  content: "";
  position: absolute;
  left: 4px;
  top: -4px;
  width: 1px;
  height: 9px;
  background: #fff;
}
.track {
  height: 11px;
  background: linear-gradient(#9a9a9a, #9a9a9a) 0 5px / 100% 1px no-repeat;
  display: flex;
  justify-content: center;
}
.track i {
  width: 5px;
  height: 11px;
  margin-left: 4px;
  background: #b4b4b4;
}

/* Watermark lies over the slide and the status bar */
.mark {
  position: absolute;
  left: 850px;
  top: 915px;
  width: 220px;
  height: 118px;
  fill: #c6c9cc;
  stroke: #c6c9cc;
  stroke-linejoin: round;
  opacity: 0.9;
}
.ar {
  font: 700 65px "DejaVu Sans", sans-serif;
  direction: rtl;
  stroke-width: 2.5px;
}
.en {
  font: 400 33px Lato, sans-serif;
  stroke-width: 2.4px;
}
```
